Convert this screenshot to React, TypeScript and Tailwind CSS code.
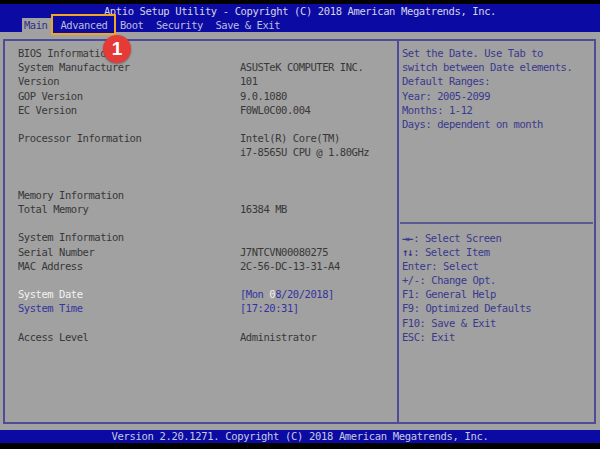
const MONO = "font-['DejaVu_Sans_Mono','Liberation_Mono',monospace] text-[10.5px] tracking-[-0.45px] leading-[14.2px]";

type Row = { label?: string; value?: string };

const LEFT_ROWS: Row[] = [
  { label: "BIOS Information" },
  { label: "System Manufacturer", value: "ASUSTeK COMPUTER INC." },
  { label: "Version", value: "101" },
  { label: "GOP Version", value: "9.0.1080" },
  { label: "EC Version", value: "F0WL0C00.004" },
  {},
  { label: "Processor Information", value: "Intel(R) Core(TM)" },
  { value: "i7-8565U CPU @ 1.80GHz" },
  {},
  {},
  { label: "Memory Information" },
  { label: "Total Memory", value: "16384 MB" },
  {},
  { label: "System Information" },
  { label: "Serial Number", value: "J7NTCVN00080275" },
  { label: "MAC Address", value: "2C-56-DC-13-31-A4" },
  {},
];

const HELP_TOP = [
  "Set the Date. Use Tab to",
  "switch between Date elements.",
  "Default Ranges:",
  "Year: 2005-2099",
  "Months: 1-12",
  "Days: dependent on month",
];

const HELP_KEYS: [string, string][] = [
  ["→←", ": Select Screen"],
  ["↑↓", ": Select Item"],
  ["", "Enter: Select"],
  ["", "+/-: Change Opt."],
  ["", "F1: General Help"],
  ["", "F9: Optimized Defaults"],
  ["", "F10: Save & Exit"],
  ["", "ESC: Exit"],
];

const TABS = ["Main", "Advanced", "Boot", "Security", "Save & Exit"];

function InfoRow({ label, value }: Row) {
  return (
    <div className="flex h-[14.2px] whitespace-pre">
      <div className="w-[222px]">{label ?? ""}</div>
      <div>{value ?? ""}</div>
    </div>
  );
}

export default function App() {
  return (
    <div className={`relative w-[600px] h-[449px] bg-black flex flex-col overflow-hidden ${MONO}`}>
      <div className="h-[4px]" />
      {/* header */}
      <div className="bg-[#0b0ba3] text-[#d4d4e6]">
        <div className="h-[14px] flex items-center justify-center whitespace-pre tracking-[-0.38px]">
          Aptio Setup Utility - Copyright (C) 2018 American Megatrends, Inc.
        </div>
        <div className="h-[14px] flex items-center pl-[22px] gap-[8.5px] text-[#bdbddc]">
          {TABS.map((t, i) => (
            <div
              key={t}
              className={
                i === 0
                  ? "h-full flex items-center pl-[2px] pr-[4px] mr-[-1.5px] bg-[#a1a1a1] text-[#2f2f8c]"
                  : "relative h-full flex items-center px-[2px] whitespace-pre"
              }
            >
              {i === 1 && (
                <span className="absolute left-[-8px] right-[-7px] top-[-4px] bottom-[-3px] border-2 border-[#f2a524] bg-[#0b0ba3]" />
              )}
              <span className="relative">{t}</span>
            </div>
          ))}
        </div>
      </div>

      {/* body */}
      <div className="flex-1 bg-[#a1a1a1] pt-[7px] pl-[3px] pr-[4px] pb-[6px] flex">
        <div className="flex-1 flex border-2 border-[#4d4d97]">
          <div className="w-[392px] pl-[13px] pt-[5px] text-[#383838]">
            {LEFT_ROWS.map((r, i) => (
              <InfoRow key={i} {...r} />
            ))}
            <div className="flex h-[14.2px] whitespace-pre">
              <div className="w-[222px] text-[#f2f2f2]">System Date</div>
              <div className="text-[#3434a0]">
                [Mon <span className="text-[#f2f2f2]">0</span>8/20/2018]
              </div>
            </div>
            <div className="flex h-[14.2px] whitespace-pre text-[#3434a0]">
              <div className="w-[222px]">System Time</div>
              <div>[17:20:31]</div>
            </div>
            <InfoRow />
            <InfoRow label="Access Level" value="Administrator" />
          </div>
          <div className="w-[2px] bg-[#4d4d97]" />
          <div className="flex-1 pt-[5px] text-[#39398e]">
            <div className="pl-[3px]">
              {HELP_TOP.map((l) => (
                <div key={l} className="h-[14.2px] whitespace-pre">{l}</div>
              ))}
            </div>
            <div className="h-[85.2px]" />
            <div className="h-[14.2px] flex items-center pl-[1px] pr-[1px]">
              <div className="h-[2px] w-full bg-[#5a5a8e]" />
            </div>
            <div className="pl-[3px]">
              {HELP_KEYS.map(([a, l]) => (
                <div key={l} className="h-[14.2px] whitespace-pre">
                  {a && <span className="font-bold tracking-[-1.2px] pr-[1px]">{a}</span>}
                  {l}
                </div>
              ))}
            </div>
          </div>
        </div>
      </div>

      {/* footer */}
      <div className="h-[13px] bg-[#0b0ba3] text-[#c9c9e2] flex items-center justify-center whitespace-pre tracking-[-0.34px]">
        Version 2.20.1271. Copyright (C) 2018 American Megatrends, Inc.
      </div>
      <div className="h-[6px]" />

      {/* callout badge */}
      <div className="absolute left-[103px] top-[35px] w-[28px] h-[28px] rounded-full bg-[#e53a36] text-white flex items-center justify-center font-['Liberation_Sans',Arial,sans-serif] text-[19px] font-bold tracking-normal shadow-[0_1px_2px_rgba(0,0,0,0.35)]">
        1
      </div>
    </div>
  );
}
